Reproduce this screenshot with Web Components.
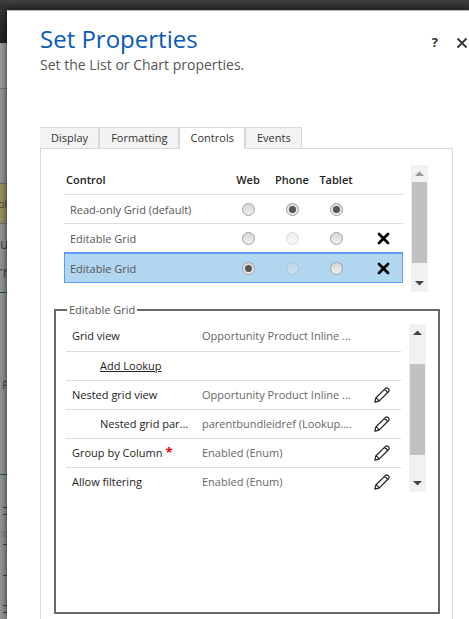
<!DOCTYPE html>
<html lang="en">
<head>
<meta charset="utf-8">
<title>Set Properties</title>
<style>
html,body{margin:0;height:100%}
body{font-family:"Open Sans","Noto Sans",sans-serif;font-size:11px;color:#333;overflow:hidden;background:#8f9091}
</style>
</head>
<body>
<app-shell>
  <form-backdrop slot="backdrop"></form-backdrop>
  <properties-dialog>
    <span slot="title">Set Properties</span>
    <span slot="subtitle">Set the List or Chart properties.</span>
    <tab-strip slot="tabs"></tab-strip>
    <control-table></control-table>
    <property-group></property-group>
  </properties-dialog>
</app-shell>
<script>
const define = (name, html, setup) => customElements.define(name, class extends HTMLElement {
  constructor() {
    super();
    const t = document.createElement('template');
    t.innerHTML = html;
    this.attachShadow({ mode: 'open' }).append(t.content.cloneNode(true));
    if (setup) setup(this.shadowRoot);
  }
});

define('app-shell', `<style>
:host{display:flex;position:relative;min-height:100vh;max-height:100vh;overflow:hidden}
slot[name=backdrop]::slotted(*){position:absolute;inset:0}
::slotted(properties-dialog){flex:1}
</style><slot name="backdrop"></slot><slot></slot>`);

define('form-backdrop', `<style>
:host{display:flex;flex-direction:column;background:#939495;color:#444;overflow:hidden;line-height:16px}
div{box-sizing:border-box;flex:none}
.nav{height:43px;background:linear-gradient(#404040,#353535 6px,#222)}
.head{height:46px;border-bottom:1px solid #737475;background:#9b9c9d}
.cmds{height:95px;border-bottom:1px solid #6c6d78}
.note{height:40px;background:#98935f;border-bottom:1px solid #737475;padding-top:12px;text-indent:-2px}
.name{height:69px;border-bottom:1px solid #1c4d62;font-size:14px;line-height:28px;padding-top:6px;overflow:hidden}
.name p{margin:0;text-indent:-3px}
.body{height:182px;border-bottom:1px solid #1c4d62;padding:84px 0 0 2px}
.list{height:144px;display:flex;flex-direction:column;padding:32px 0 0 3px}
.list i{height:6px;border-top:1px solid #444}
.list b{font-weight:400;color:#777;line-height:16px;margin-top:4px;height:20px;text-indent:-5px}
.list .gap{height:30px}
</style>
<div class="nav"></div><div class="head"></div><div class="cmds"></div>
<div class="note">ol</div><div class="name">u<p>rn</p></div><div class="body">P</div>
<div class="list"><i></i><i></i><b>ns</b><i class="gap"></i><i class="gap"></i><i></i><i></i></div>`);

define('properties-dialog', `<style>
:host{display:flex;flex-direction:column;position:relative;box-sizing:border-box;margin:10px 0 0 7px;
 padding:11px 0 0 33px;background:#fff;border-top:1px solid #bbb;box-shadow:0 0 7px #000b;min-width:0}
header{display:flex;flex:none;justify-content:space-between;height:105px}
h1{margin:0;font-weight:400;font-size:24px;line-height:34px;color:#0859b8}
p{margin:0;font-size:14px;line-height:18px;color:#555}
nav{display:flex;align-items:flex-start;gap:18px;padding-top:12px}
button{border:0;background:none;padding:0;height:16px;color:#333;font:bold 13px/16px "Open Sans",sans-serif}
svg{display:block;margin:2px 1px 0 0}
main{flex:1;box-sizing:border-box;margin-right:16px;border:1px solid #d8d8d8;border-width:0 1px;
 display:flex;flex-direction:column;gap:10px;padding:16px 12px 0 13px}
::slotted(*){flex:none;min-width:0}
</style>
<header><div><h1><slot name="title"></slot></h1><p><slot name="subtitle"></slot></p></div>
<nav><button aria-label="Help">?</button><button aria-label="Close"><svg width="12" height="12" viewBox="0 0 12 12"><path d="M1.500 1.500 10.500 10.500M10.500 1.500 1.500 10.500" stroke="#333" stroke-width="1.800" fill="none"/></svg></button></nav></header>
<slot name="tabs"></slot><main><slot></slot></main>`);

define('tab-strip', `<style>
:host{display:flex;margin-right:16px}
button{font:inherit;line-height:20px;color:#333;background:#f3f3f3;border:1px solid #d8d8d8;border-width:1px 2px 1px 0;padding:0 10px 0 11px;height:22px;white-space:nowrap}
button:first-child{border-left-width:1px}
button[aria-selected=true]{background:#fff;border-bottom-color:#fff}
button:last-of-type{border-right-width:1px}
span{flex:1;border-bottom:1px solid #d8d8d8}
</style>
<button role="tab">Display</button><button role="tab">Formatting</button><button role="tab" aria-selected="true">Controls</button><button role="tab">Events</button><span></span>`);

define('scroll-rail', `<style>
:host{display:flex;flex-direction:column;width:17px;background:#f1f1f1}
button{border:0;padding:0;background:none;height:17px;display:grid;place-items:center;color:var(--up,#444)}
.track+button{color:#444}
.track{flex:1;display:flex;flex-direction:column;padding:0 1px}
.before{flex:var(--before,0) 0 0}.thumb{flex:var(--thumb,80) 0 0;background:#c1c1c1}.after{flex:var(--after,12) 0 0}
</style>
<button aria-label="Scroll up"><svg width="9" height="5" viewBox="0 0 9 5"><path d="M0 5 4.500 .5 9 5z" fill="currentColor"/></svg></button>
<div class="track"><div class="before"></div><div class="thumb"></div><div class="after"></div></div>
<button aria-label="Scroll down"><svg width="9" height="5" viewBox="0 0 9 5"><path d="M0 0 4.500 4.500 9 0z" fill="currentColor"/></svg></button>`);

define('control-table', `<style>
:host{display:flex;gap:8px;padding:0 12px 0 10px}
.wrap{flex:1;min-width:0}
scroll-rail{height:127px;flex:none}
table{width:100%;border-collapse:collapse;table-layout:fixed}
th{height:29px;padding:0;font-weight:600;text-align:center;color:#222;white-space:nowrap}
th:first-child{text-align:left;padding-left:2px}
td{height:28px;padding:0;text-align:center;border-top:1px solid #ddd;color:#555}
td:first-child{text-align:left;padding-left:6px;white-space:nowrap}
td:last-child{padding-left:6px}
tr.on{background:#b1d6f0;outline:1px solid #5e9cf5;outline-offset:-1px}
tr.on td{height:30px;border-top-color:#5e9cf5}
input{appearance:none;display:grid;place-items:center;box-sizing:border-box;width:13px;height:13px;margin:0 auto;border:1px solid #a0a0a0;border-radius:50%;background:linear-gradient(#d8d8d8,#eee)}
input:checked::before{content:"";width:7px;height:7px;border-radius:50%;background:#555}
input:disabled{opacity:.4}
button{display:block;margin:0 auto;border:0;background:none;padding:0;height:13px}
svg{display:block}
</style>
<div class="wrap"><table><colgroup><col><col style="width:44px"><col style="width:44px"><col style="width:44px"><col style="width:45px"></colgroup>
<thead><tr><th>Control</th><th>Web</th><th>Phone</th><th>Tablet</th><th></th></tr></thead><tbody></tbody></table></div>
<scroll-rail style="--before:0;--thumb:80;--after:12;--up:#999"></scroll-rail>`,
root => {
  const rows = [['Read-only Grid (default)', '.cc', 0], ['Editable Grid', '.d.', 1], ['Editable Grid', 'cd.', 1]];
  const devices = ['Web', 'Phone', 'Tablet'];
  root.querySelector('tbody').innerHTML = rows.map(([name, states, removable], r) =>
    `<tr class="${r === 2 ? 'on' : ''}"><td>${name}</td>` +
    devices.map((d, i) => `<td><input type="radio" name="${d}" aria-label="${name} on ${d}"${states[i] === 'c' ? ' checked' : ''}${states[i] === 'd' ? ' disabled' : ''}></td>`).join('') +
    `<td>${removable ? '<button aria-label="Remove"><svg width="13" height="13" viewBox="0 0 13 13"><path d="M2 2 11 11M11 2 2 11" stroke="#000" stroke-width="2.8" stroke-linecap="round"/></svg></button>' : ''}</td></tr>`).join('');
});

define('edit-button', `<style>
:host{display:block}
button{display:block;border:0;background:none;padding:0}svg{display:block}
</style><button aria-label="Edit"><svg width="16" height="16" viewBox="0 0 16 16" fill="none" stroke="#222" stroke-width="1.200" stroke-linejoin="round"><path d="M.8 15.200 1.800 11 11.500 1.400Q12.800.4 14.300 1.700T14.700 4.500L5 14.200ZM1.800 11Q4.400 11.500 5 14.200M10.300 2.600Q12.800 3.200 13.500 5.700"/></svg></button>`);

define('property-group', `<style>
:host{display:block}
fieldset{box-sizing:border-box;min-width:0;margin:0;border:2px solid #686868;padding:4px 12px 10px 10px;min-height:312px}
legend{margin-left:1px;padding:0 2px;line-height:16px;color:#555}
.body{display:flex;gap:8px}
.wrap{flex:1;min-width:0;height:172px;overflow:hidden}
table{width:100%;border-collapse:collapse;table-layout:fixed}
tr+tr{border-top:1px solid #ddd}
th,td{box-sizing:border-box;height:29px;padding:0 6px;font-weight:400;text-align:left;white-space:nowrap;overflow:hidden;text-overflow:ellipsis;line-height:16px}
th{color:#222}th.sub{padding:0 0 0 34px}
td{color:#666;padding:0 0 0 6px}
a{color:#222}em{color:#e00;font-style:normal;font-weight:700;font-size:13px;line-height:12px}
scroll-rail{height:168px;flex:none;margin-top:2px}
</style>
<fieldset><legend>Editable Grid</legend><div class="body"><div class="wrap"><table>
<colgroup><col style="width:130px"><col><col style="width:33px"></colgroup><tbody></tbody></table></div>
<scroll-rail style="--before:23;--thumb:91;--after:20"></scroll-rail></div></fieldset>`,
root => {
  const rows = [
    ['Grid view', 'Opportunity Product Inline ...', 0, 0],
    ['<a href="#">Add Lookup</a>', '', 1, 0],
    ['Nested grid view', 'Opportunity Product Inline ...', 0, 1],
    ['Nested grid par...', 'parentbundleidref (Lookup....', 1, 1],
    ['Group by Column <em>*</em>', 'Enabled (Enum)', 0, 1],
    ['Allow filtering', 'Enabled (Enum)', 0, 1]];
  root.querySelector('tbody').innerHTML = rows.map(([name, value, sub, edit]) =>
    `<tr><th scope="row"${sub ? ' class="sub"' : ''}>${name}</th><td>${value}</td><td>${edit ? '<edit-button></edit-button>' : ''}</td></tr>`).join('');
});
</script>
</body>
</html>
